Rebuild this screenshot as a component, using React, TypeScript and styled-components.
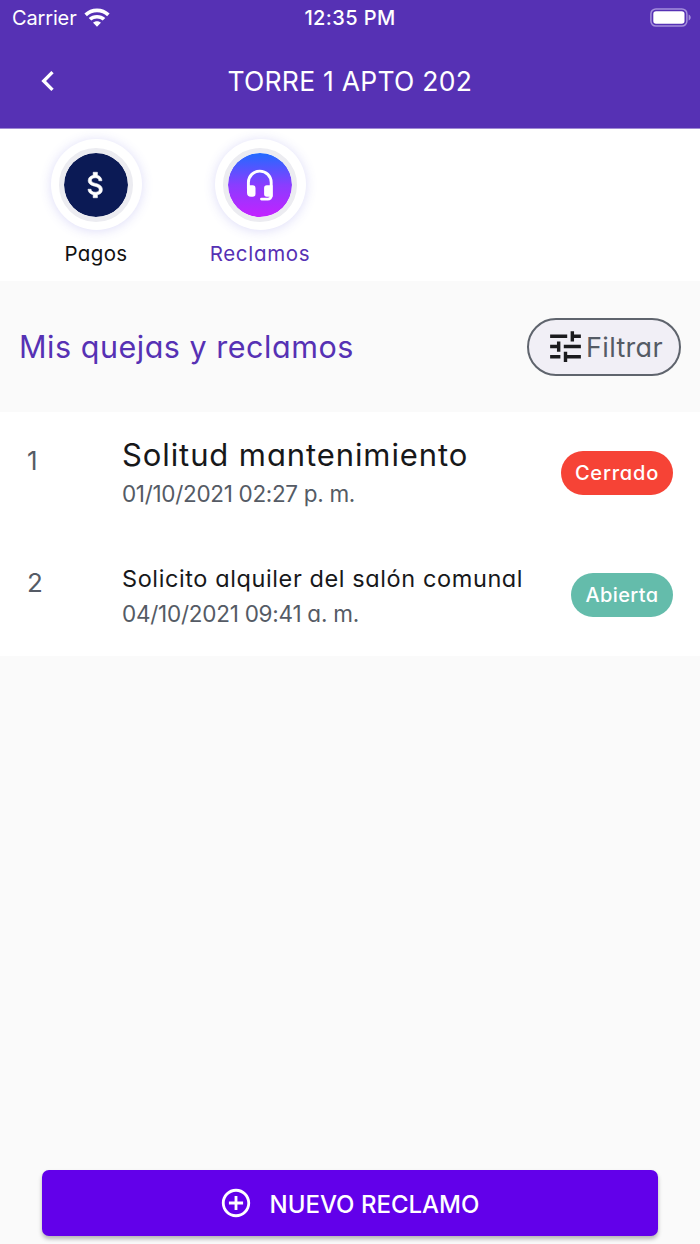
import React from "react";
import styled, { createGlobalStyle } from "styled-components";
import { MdAddCircleOutline, MdChevronLeft, MdTune } from "react-icons/md";

const GlobalStyle = createGlobalStyle`
  * { box-sizing: border-box; }
  body {
    margin: 0;
    background: #fafafa;
    font-family: Inter, "Liberation Sans", sans-serif;
    font-feature-settings: "cv11" 1;
  }
  button { font-feature-settings: inherit; }
  svg { display: block; flex: none; }
`;

const Screen = styled.div`
  width: 700px;
  height: 1244px;
  display: flex;
  flex-direction: column;
  overflow: hidden;
  background: #fafafa;
`;

const Header = styled.header`
  height: 128px;
  flex: none;
  background: #5631b4;
  color: #fff;
  font-feature-settings: normal;
`;

const StatusBar = styled.div`
  display: grid;
  grid-template-columns: 1fr auto 1fr;
  align-items: center;
  height: 35px;
  padding: 0 9px 0 12px;
`;

const Carrier = styled.div`
  display: flex;
  align-items: center;
  gap: 7.5px;
  font-size: 20px;
  line-height: 24px;
  letter-spacing: -0.15px;
`;

const Clock = styled.div`
  margin-right: 3px;
  font-size: 20px;
  font-weight: 500;
  line-height: 24px;
  letter-spacing: 0.4px;
`;

const BatterySlot = styled.div`
  justify-self: end;
`;

const TitleBar = styled.div`
  display: grid;
  grid-template-columns: 40px 1fr 40px;
  align-items: center;
  height: 92px;
  padding: 0 28px 0 27.5px;
`;

const BackButton = styled.button`
  display: flex;
  padding: 0;
  border: 0;
  background: none;
  color: #fff;
`;

const PageTitle = styled.h1`
  margin: 0;
  font-size: 26.5px;
  font-weight: 400;
  line-height: 32px;
  letter-spacing: 0.25px;
  text-align: center;
`;

const Tabs = styled.nav`
  display: flex;
  flex: none;
  height: 153px;
  padding: 10px 0 0 14px;
  border-top: 1px solid #9f8ad4;
  background: #fff;
`;

const Tab = styled.a<{ $active?: boolean }>`
  display: flex;
  flex-direction: column;
  align-items: center;
  width: 164px;
  color: ${(p) => (p.$active ? "#5631b4" : "#111")};
`;

const Halo = styled.div`
  display: flex;
  align-items: center;
  justify-content: center;
  width: 91px;
  height: 91px;
  border-radius: 50%;
  background: #fff;
  box-shadow: 0 1px 12px rgba(86, 80, 220, 0.2);
`;

const Disc = styled.div<{ $fill: string }>`
  display: flex;
  align-items: center;
  justify-content: center;
  width: 74px;
  height: 74px;
  border: 5px solid #ececf1;
  border-radius: 50%;
  background: ${(p) => p.$fill};
  background-clip: padding-box;
  color: #fff;
`;

const TabLabel = styled.span<{ $spacing: number }>`
  margin-top: 11px;
  font-size: 20.5px;
  line-height: 26px;
  letter-spacing: ${(p) => p.$spacing}px;
`;

const Toolbar = styled.section`
  display: flex;
  align-items: center;
  justify-content: space-between;
  flex: none;
  height: 131px;
  padding: 0 19px;
`;

const Heading = styled.h2`
  margin: 0;
  color: #5631b4;
  font-size: 30.5px;
  font-weight: 400;
  line-height: 40px;
  letter-spacing: 0.52px;
`;

const FilterButton = styled.button`
  display: flex;
  align-items: center;
  justify-content: center;
  width: 154px;
  height: 58px;
  padding: 0;
  border: 2px solid #5f646d;
  border-radius: 29px;
  background: #f1eff6;
  color: #1b1b1e;
`;

const FilterLabel = styled.span`
  padding-top: 2px;
  color: #555b65;
  font-family: Inter, sans-serif;
  font-size: 27px;
  font-weight: 400;
  line-height: 32px;
  letter-spacing: 0.3px;
`;

const List = styled.ul`
  flex: none;
  margin: 0;
  padding: 0;
  list-style: none;
  background: #fff;
`;

const Row = styled.li`
  display: grid;
  grid-template-columns: 95px 1fr auto;
  height: 122px;
  padding: 0 27px;
`;

const Index = styled.span`
  padding-top: 33px;
  color: #555b65;
  font-size: 26px;
  line-height: 32px;
`;

const Details = styled.div<{ $top: number }>`
  padding-top: ${(p) => p.$top}px;
  white-space: nowrap;
`;

const Subject = styled.div<{ $size: number; $line: number; $spacing: number }>`
  color: #17181a;
  font-size: ${(p) => p.$size}px;
  line-height: ${(p) => p.$line}px;
  letter-spacing: ${(p) => p.$spacing}px;
`;

const DateText = styled.div<{ $spacing: number }>`
  color: #555b65;
  font-size: 22.5px;
  line-height: 36px;
  letter-spacing: ${(p) => p.$spacing}px;
`;

const Status = styled.span<{ $color: string; $width: number; $spacing: number }>`
  display: flex;
  align-items: center;
  justify-content: center;
  width: ${(p) => p.$width}px;
  height: 44px;
  margin-top: 39px;
  border-radius: 22px;
  background: ${(p) => p.$color};
  color: #fff;
  font-size: 20px;
  font-weight: 500;
  letter-spacing: ${(p) => p.$spacing}px;
`;

const Footer = styled.footer`
  margin-top: auto;
  padding: 0 42px 8px;
`;

const PrimaryButton = styled.button`
  display: flex;
  align-items: center;
  justify-content: center;
  gap: 17px;
  width: 616px;
  height: 66px;
  padding: 0 2px 0 0;
  border: 0;
  border-radius: 7px;
  background: #6200ea;
  box-shadow: 0 3px 4px rgba(0, 0, 0, 0.28);
  color: #fff;
  font-family: Inter, sans-serif;
  font-size: 24px;
  font-weight: 500;
`;

const PrimaryLabel = styled.span`
  padding-top: 2px;
`;

const WifiIcon = () => (
  <svg width="26" height="20" viewBox="0 0 26 20" fill="#fff">
    <path d="M13 0.6C8.1 0.6 3.7 2.5.4 5.6L2.9 8.2C5.5 5.7 9.1 4.2 13 4.2s7.500 1.500 10.100 4L25.600 5.600C22.300 2.500 17.900.6 13 .6Z" />
    <path d="M13 6.900c-3.200 0-6.100 1.200-8.300 3.200l2.600 2.500c1.500-1.400 3.500-2.200 5.700-2.200s4.200.8 5.700 2.200l2.600-2.500C19.100 8.100 16.200 6.900 13 6.900Z" />
    <path d="M13 13.200c-1.500 0-2.900.5-3.900 1.500L13 18.800l3.900-4.100c-1-1-2.400-1.500-3.900-1.500Z" />
  </svg>
);

const BatteryIcon = () => (
  <svg width="41" height="19" viewBox="0 0 41 19">
    <rect x="0.900" y="0.900" width="36" height="17.200" rx="5" fill="none" stroke="#a48fdb" strokeWidth="1.500" />
    <rect x="3.300" y="3.200" width="31.200" height="12.600" rx="2.800" fill="#fff" />
    <path d="M38.600 6.500v6c1.300-.5 2.100-1.600 2.100-3s-.8-2.500-2.100-3Z" fill="#a48fdb" />
  </svg>
);

const MoneyIcon = () => (
  <svg width="34" height="34" viewBox="0 0 24 24" fill="#fff" stroke="#fff" strokeWidth="0.400">
    <path d="M11.800 10.900c-2.270-.59-3-1.200-3-2.150 0-1.090 1.010-1.850 2.700-1.850 1.780 0 2.440.85 2.500 2.100h2.210c-.07-1.720-1.120-3.300-3.210-3.810V3h-3v2.160c-1.940.42-3.500 1.680-3.500 3.610 0 2.310 1.910 3.460 4.700 4.130 2.500.6 3 1.480 3 2.410 0 .69-.49 1.790-2.700 1.790-2.060 0-2.870-.92-2.980-2.100h-2.200c.12 2.190 1.760 3.420 3.680 3.830V21h3v-2.150c1.950-.37 3.500-1.500 3.500-3.550 0-2.840-2.430-3.810-4.700-4.400Z" />
  </svg>
);

const HeadsetIcon = () => (
  <svg width="28" height="34" viewBox="0 -0.700 28 34" fill="#fff">
    <path
      d="M2.400 20V13.800C2.400 7.400 7.500 2.400 13.800 2.400S25.200 7.400 25.200 13.800V27a3.400 3.400 0 0 1-3.400 3.400H15.500"
      fill="none"
      stroke="#fff"
      strokeWidth="2.900"
      strokeLinecap="round"
    />
    <path d="M1 16.500H6.800a2.700 2.700 0 0 1 2.700 2.700v6.200a2.700 2.700 0 0 1-2.700 2.700H5a4 4 0 0 1-4-4Z" />
    <path d="M26.600 16.500H20.800a2.700 2.700 0 0 0-2.700 2.700v6.200a2.700 2.700 0 0 0 2.700 2.700H26.600Z" />
  </svg>
);

export default function App() {
  return (
    <>
      <GlobalStyle />
      <Screen>
        <Header>
          <StatusBar>
            <Carrier>
              Carrier
              <WifiIcon />
            </Carrier>
            <Clock>12:35 PM</Clock>
            <BatterySlot>
              <BatteryIcon />
            </BatterySlot>
          </StatusBar>
          <TitleBar>
            <BackButton aria-label="Volver">
              <MdChevronLeft size={40} />
            </BackButton>
            <PageTitle>TORRE 1 APTO 202</PageTitle>
          </TitleBar>
        </Header>

        <Tabs>
          <Tab>
            <Halo>
              <Disc $fill="#0b1a55">
                <MoneyIcon />
              </Disc>
            </Halo>
            <TabLabel $spacing={0.4}>Pagos</TabLabel>
          </Tab>
          <Tab $active>
            <Halo>
              <Disc $fill="linear-gradient(#216bff, #8a3dff 50%, #c322ff)">
                <HeadsetIcon />
              </Disc>
            </Halo>
            <TabLabel $spacing={0.7}>Reclamos</TabLabel>
          </Tab>
        </Tabs>

        <Toolbar>
          <Heading>Mis quejas y reclamos</Heading>
          <FilterButton>
            <MdTune size={41} />
            <FilterLabel>Filtrar</FilterLabel>
          </FilterButton>
        </Toolbar>

        <List>
          <Row>
            <Index>1</Index>
            <Details $top={21}>
              <Subject $size={31} $line={43} $spacing={0.9}>
                Solitud mantenimiento
              </Subject>
              <DateText $spacing={-0.32}>01/10/2021 02:27 p. m.</DateText>
            </Details>
            <Status $color="#f64336" $width={112} $spacing={0.8}>
              Cerrado
            </Status>
          </Row>
          <Row>
            <Index>2</Index>
            <Details $top={27}>
              <Subject $size={23.5} $line={35} $spacing={0.6}>
                Solicito alquiler del salón comunal
              </Subject>
              <DateText $spacing={-0.25}>04/10/2021 09:41 a. m.</DateText>
            </Details>
            <Status $color="#64bcab" $width={102} $spacing={0.4}>
              Abierta
            </Status>
          </Row>
        </List>

        <Footer>
          <PrimaryButton>
            <MdAddCircleOutline size={34} />
            <PrimaryLabel>NUEVO RECLAMO</PrimaryLabel>
          </PrimaryButton>
        </Footer>
      </Screen>
    </>
  );
}
